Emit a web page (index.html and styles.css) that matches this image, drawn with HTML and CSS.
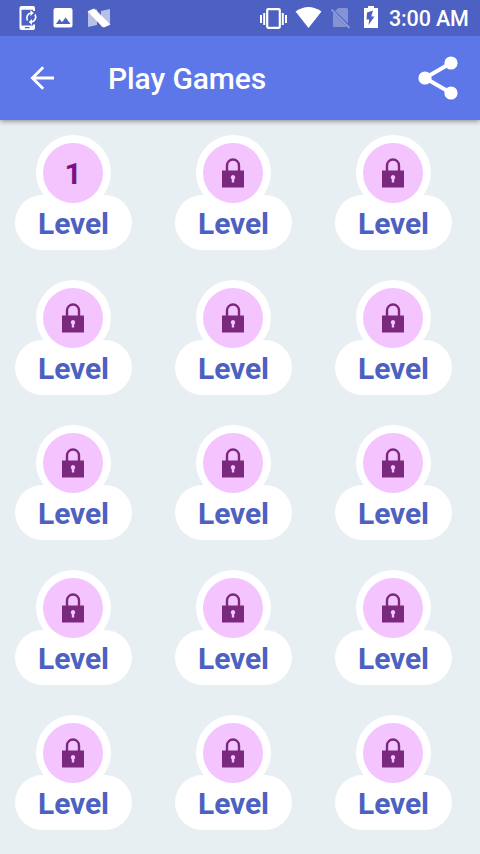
FILE: index.html
```
<!DOCTYPE html>
<html lang="en">
<head>
<meta charset="utf-8">
<meta name="viewport" content="width=device-width, initial-scale=1.0">
<title>Play Games</title>
<link rel="stylesheet" href="styles.css">
</head>
<body>
<div class="status-bar">
    <svg class="status-icons" width="385" height="36" viewBox="0 0 385 36" fill="#fff">
        <!-- phone update -->
        <path fill-rule="evenodd" d="M21.500 6h11.500q2 0 2 2v3h-2V9.800H21.500V25.500H33V24.500h2V28q0 2-2 2H21.500q-2 0-2-2V8q0-2 2-2zM25 27h4.500v1.200H25z"/>
        <path d="M27.500 20.500a5 5 0 0 1 3.500-7.500M35 14.500a5 5 0 0 1-3.500 7.500" fill="none" stroke="#fff" stroke-width="1.600"/>
        <path d="M30.500 10l3.200 3-3.200 3zM32 19l-3.200 3 3.200 3z"/>
        <!-- picture -->
        <path fill-rule="evenodd" d="M55.500 8h15q2 0 2 2v15.500q0 2-2 2h-15q-2 0-2-2V10q0-2 2-2zM56 24h14.500l-4.800-6.500-3.700 4.800-2.500-3.300z"/>
        <!-- N logo -->
        <path opacity=".6" d="M88 11l9-1.500v15.500L88 27zM101 11l9-2v15.500l-9 2z"/>
        <path d="M88 11.500l5-2.300q1.500-.6 2.600.8L110 24.500l-5.500 2.400q-1.500.6-2.700-.8z" stroke="#fff" stroke-width=".6"/>
        <!-- vibrate -->
        <rect x="267.200" y="9.200" width="12.600" height="18.600" rx="1" fill="none" stroke="#fff" stroke-width="2.200"/>
        <path d="M260 15h2v8h-2zM263.200 13h2v12h-2zM281.800 13h2v12h-2zM285 15h2v8h-2z"/>
        <!-- wifi -->
        <path d="M295.500 11.500q13-9 26 0L308.500 28z"/>
        <!-- no sim -->
        <path opacity=".32" d="M338.500 8h8q1.500 0 1.500 1.500v14L335 10.800zM333 12.500L347 27h-12.500q-1.500 0-1.500-1.500z"/>
        <path opacity=".4" d="M331.500 9.500L349.500 27.800" stroke="#fff" stroke-width="1.700"/>
        <!-- battery charging -->
        <path fill-rule="evenodd" d="M368 6h6v2h4v20h-14V8h4zM373 10.500l-6 2-.5 7h2.700l-.7 5.500 6-8.500h-3.200z"/>
    </svg>
    <span class="clock">3:00 AM</span>
</div>
<header class="toolbar">
    <svg class="back" width="24" height="24" viewBox="0 0 24 24" fill="none" stroke="#fff" stroke-width="2.800">
        <path d="M24 12H3M13.200 1.200L2.400 12l10.800 10.800"/>
    </svg>
    <h1>Play Games</h1>
    <svg class="share" width="40" height="44" viewBox="0 0 40 44">
        <path d="M33 7L7 22l26 15" fill="none" stroke="#fff" stroke-width="4"/>
        <g fill="#fff"><circle cx="33" cy="7" r="6.600"/><circle cx="7" cy="22" r="6.600"/><circle cx="33" cy="37" r="6.600"/></g>
    </svg>
</header>
<main class="levels" id="levels">
    <div class="level">
        <div class="ring"><div class="dot">1</div></div>
        <div class="label">Level</div>
    </div>
</main>
<template id="locked">
    <div class="level">
        <div class="ring">
            <div class="dot">
                <svg width="22" height="30" viewBox="0 0 22 30">
                    <path d="M5 13V7.500a6 6 0 0 1 12 0V13" fill="none" stroke="#7b287f" stroke-width="2.400"/>
                    <path d="M0 12.500h22v17H0z" fill="#7b287f"/>
                    <path d="M11 17a2.300 2.300 0 0 1 1.200 4.200v3.300H9.800v-3.300A2.300 2.300 0 0 1 11 17z" fill="#f3c4fd"/>
                </svg>
            </div>
        </div>
        <div class="label">Level</div>
    </div>
</template>
<script>
    const levels = document.getElementById('levels');
    const locked = document.getElementById('locked');

    // level 1 is open, the other 14 are locked
    for (let i = 2; i <= 15; i++) {
        levels.appendChild(locked.content.cloneNode(true));
    }
</script>
</body>
</html>
```
FILE: styles.css
```
:root {
    --primary-color: #5d76e8;
    --primary-dark: #4c61c1;
    --page-bg: #e8eff3;
    --dot-color: #f3c4fd;
}
* {
    box-sizing: border-box;
    margin: 0;
    padding: 0;
}
body {
    font-family: Roboto, sans-serif;
    background-color: var(--page-bg);
    height: 854px;
    overflow: hidden;
}
svg {
    display: block;
    flex-shrink: 0;
}
.status-bar {
    height: 36px;
    display: flex;
    align-items: center;
    position: relative;
    z-index: 2;
    background-color: var(--primary-dark);
    color: white;
}
.clock {
    margin-left: 4px;
    font-size: 21.5px;
    font-weight: 500;
    letter-spacing: -0.15px;
    line-height: 36px;
    padding-top: 1px;
    white-space: nowrap;
}
.toolbar {
    height: 84px;
    padding: 0 22px 0 30px;
    display: flex;
    align-items: center;
    background-color: var(--primary-color);
    color: white;
    box-shadow: 0 1px 5px rgba(0, 0, 0, 0.45);
}
.toolbar h1 {
    flex: 1;
    margin-left: 54px;
    font-size: 30px;
    font-weight: 500;
    letter-spacing: -0.1px;
    line-height: 40px;
    padding-top: 1px;
}
.levels {
    padding: 15px;
    display: grid;
    grid-template-columns: repeat(3, 117px);
    column-gap: 43px;
    row-gap: 30px;
}
.level {
    display: flex;
    flex-direction: column;
    align-items: center;
    height: 115px;
}
.ring {
    width: 75px;
    height: 75px;
    padding: 8px 0 0 7px;
    border-radius: 50%;
    background-color: white;
    z-index: 1;
}
.dot {
    width: 60px;
    height: 60px;
    border-radius: 50%;
    background-color: var(--dot-color);
    color: #7a1285;
    display: flex;
    align-items: center;
    justify-content: center;
    font-size: 30px;
    font-weight: 700;
}
.label {
    width: 117px;
    height: 55px;
    margin-top: -15px;
    border-radius: 28px;
    background-color: white;
    color: #4c61c1;
    font-size: 30px;
    font-weight: 700;
    letter-spacing: -0.1px;
    line-height: 57px;
    text-align: center;
}
```
